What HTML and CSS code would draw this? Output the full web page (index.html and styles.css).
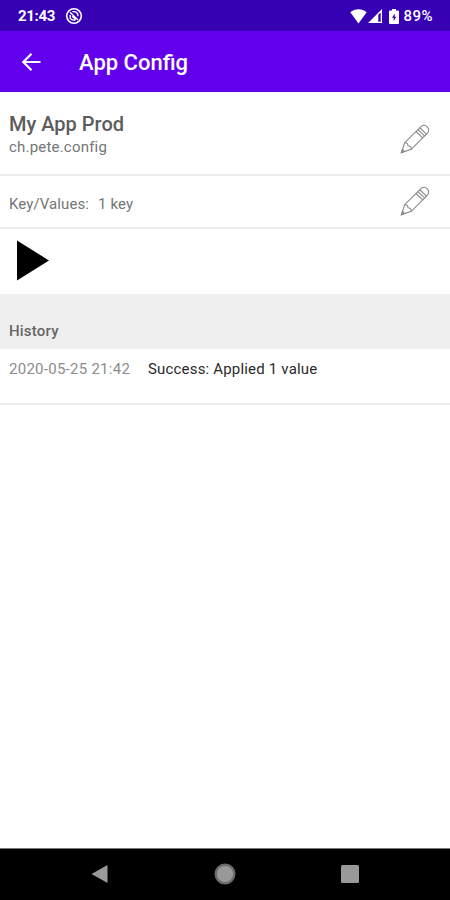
FILE: index.html
```
<!DOCTYPE html>
<html lang="en">
<head>
  <meta charset="UTF-8" />
  <meta name="viewport" content="width=device-width, initial-scale=1.0"/>
  <title>App Config</title>
  <link rel="stylesheet" href="styles.css">
</head>
<body>

  <!-- Status Bar -->
  <div class="status-bar">
    <span class="clock">21:43</span>
    <svg class="notify-icon" width="18" height="18" viewBox="0 0 18 18" fill="none" stroke="#fff">
      <circle cx="9" cy="9" r="7.3" stroke-width="1.6"/>
      <path d="M5 5.2l8 7.800M5.200 8v3.400c1.600 1.800 4 2 5.600 1M7.500 4.800c3-.8 5.600.8 5.500 4.400M7.200 9.200l2.800 2.800" stroke-width="1.4"/>
    </svg>
    <div class="status-right">
      <svg width="17" height="15" viewBox="0 0 17 15" fill="#fff">
        <path d="M.3 3.200C4.800-.7 12.200-.7 16.700 3.200L8.500 14.500z"/>
      </svg>
      <svg class="signal-icon" width="14" height="14" viewBox="0 0 14 14" fill="#fff">
        <path fill-rule="evenodd" d="M14 0v14H0zM10.300 5.800v6.900h2.400V3.500z"/>
      </svg>
      <svg class="battery-icon" width="10" height="15" viewBox="0 0 10 15" fill="#fff">
        <path fill-rule="evenodd" d="M3 0h4v1.500h2q1 0 1 1V14q0 1-1 1H1q-1 0-1-1V2.500q0-1 1-1h2zM5.700 4.500L3 8.700h1.700v3.300l2.600-4.300H5.700z"/>
      </svg>
      <span class="percent">89%</span>
    </div>
  </div>

  <!-- App Bar -->
  <div class="app-bar">
    <svg width="20" height="20" viewBox="0 0 20 20" fill="none" stroke="#fff" stroke-width="2.200">
      <path d="M19.500 10H2.500M10.500 1.800L2.300 10l8.200 8.200"/>
    </svg>
    <h1>App Config</h1>
  </div>

  <!-- Config Details -->
  <div class="row app-row">
    <div>
      <h2>My App Prod</h2>
      <p class="package">ch.pete.config</p>
    </div>
    <svg class="pencil" width="30" height="30" viewBox="0 0 32 32">
      <path d="M1.500 30.500L5 20 21.500 3.500q4-4 7.500-.5t-.5 7.500L12 27z"/>
      <path d="M5 20q3.500-.5 3.500 3.300Q12.500 23.500 12 27M17 8l7.500 7M19 6l7.500 7M21 4l7.500 7M1.500 30.500l1-3.500 2.300 2.300z"/>
    </svg>
  </div>

  <div class="row keys-row">
    <p><span class="label">Key/Values:</span><span class="count">1 key</span></p>
    <svg class="pencil" width="30" height="30" viewBox="0 0 32 32">
      <path d="M1.500 30.500L5 20 21.500 3.500q4-4 7.500-.5t-.5 7.500L12 27z"/>
      <path d="M5 20q3.500-.5 3.500 3.300Q12.500 23.500 12 27M17 8l7.500 7M19 6l7.500 7M21 4l7.500 7M1.500 30.500l1-3.500 2.300 2.300z"/>
    </svg>
  </div>

  <div class="play-row">
    <svg width="33" height="42" viewBox="0 0 33 42"><path d="M0 .5L32 20.500 0 40.500z"/></svg>
  </div>

  <!-- History -->
  <div class="history-title">History</div>
  <div class="history-row">
    <span class="date">2020-05-25 21:42</span>
    <span class="result">Success: Applied 1 value</span>
  </div>

  <!-- Navigation Bar -->
  <div class="nav-bar">
    <svg width="17" height="18" viewBox="0 0 17 18"><path d="M16.500 0v18L.5 9z" fill="#999"/></svg>
    <svg width="22" height="22" viewBox="0 0 22 22"><circle cx="11" cy="11" r="9.300" fill="#999" stroke="#6c6c6c" stroke-width="2.400"/></svg>
    <svg width="18" height="18" viewBox="0 0 18 18"><rect width="18" height="18" rx="1.500" fill="#999"/></svg>
  </div>

</body>
</html>
```

FILE: styles.css
```
* {
  box-sizing: border-box;
}

body {
  display: flex;
  flex-direction: column;
  height: 900px;
  margin: 0;
  background: #fff;
  font-family: Roboto, sans-serif;
  color: #757575;
}

h1, h2, p {
  margin: 0;
}

svg {
  display: block;
  flex: none;
}

.status-bar {
  display: flex;
  align-items: center;
  height: 31px;
  padding: 1px 17px 0 18px;
  background: #3700b3;
  color: #fff;
  font-size: 15px;
  font-weight: 700;
}

.clock {
  width: 47px;
  letter-spacing: -0.3px;
}

.status-right {
  display: flex;
  align-items: center;
  margin-left: auto;
}

.signal-icon {
  margin-left: 1px;
}

.battery-icon {
  margin: 0 4px 0 7px;
}

.percent {
  font-weight: 500;
  letter-spacing: 0.5px;
}

.app-bar {
  display: flex;
  align-items: center;
  height: 61px;
  padding: 0 21px;
  background: #6200ee;
  color: #fff;
}

.app-bar h1 {
  margin-left: 38px;
  padding-top: 2px;
  font-size: 22px;
  font-weight: 500;
}

.row {
  display: flex;
  align-items: center;
  justify-content: space-between;
  padding: 0 20px 0 9px;
  border-bottom: 2px solid #ececec;
  font-size: 15px;
}

.app-row {
  height: 84px;
  padding-top: 12px;
}

.app-row h2 {
  margin-top: -8px;
  color: #5c5c5c;
  font-size: 20px;
  font-weight: 500;
  line-height: 24px;
}

.package {
  letter-spacing: 0.2px;
  line-height: 22px;
}

.keys-row {
  height: 53px;
}

.keys-row .pencil {
  margin-bottom: 1px;
}

.keys-row p {
  padding-top: 4px;
  letter-spacing: 0.1px;
}

.count {
  margin-left: 9px;
}

.pencil {
  fill: none;
  stroke: #858585;
  stroke-width: 1.1;
}

.play-row {
  height: 65px;
  padding: 11px 17px;
}

.history-title {
  height: 55px;
  padding: 28px 9px 0;
  background: #efefef;
  color: #666;
  font-size: 15px;
  font-weight: 500;
  letter-spacing: 0.2px;
  line-height: 18px;
}

.history-row {
  display: flex;
  height: 56px;
  padding: 11px 9px;
  border-bottom: 2px solid #ececec;
  font-size: 15px;
  line-height: 18px;
}

.date {
  width: 139px;
  color: #8c8c8c;
  letter-spacing: 0.27px;
}

.result {
  color: #2a2a2a;
  letter-spacing: 0.18px;
}

.nav-bar {
  display: flex;
  align-items: center;
  justify-content: space-between;
  height: 52px;
  margin-top: auto;
  padding: 0 91px 2px;
  border-top: 1px solid #777;
  background: #000;
}
```
